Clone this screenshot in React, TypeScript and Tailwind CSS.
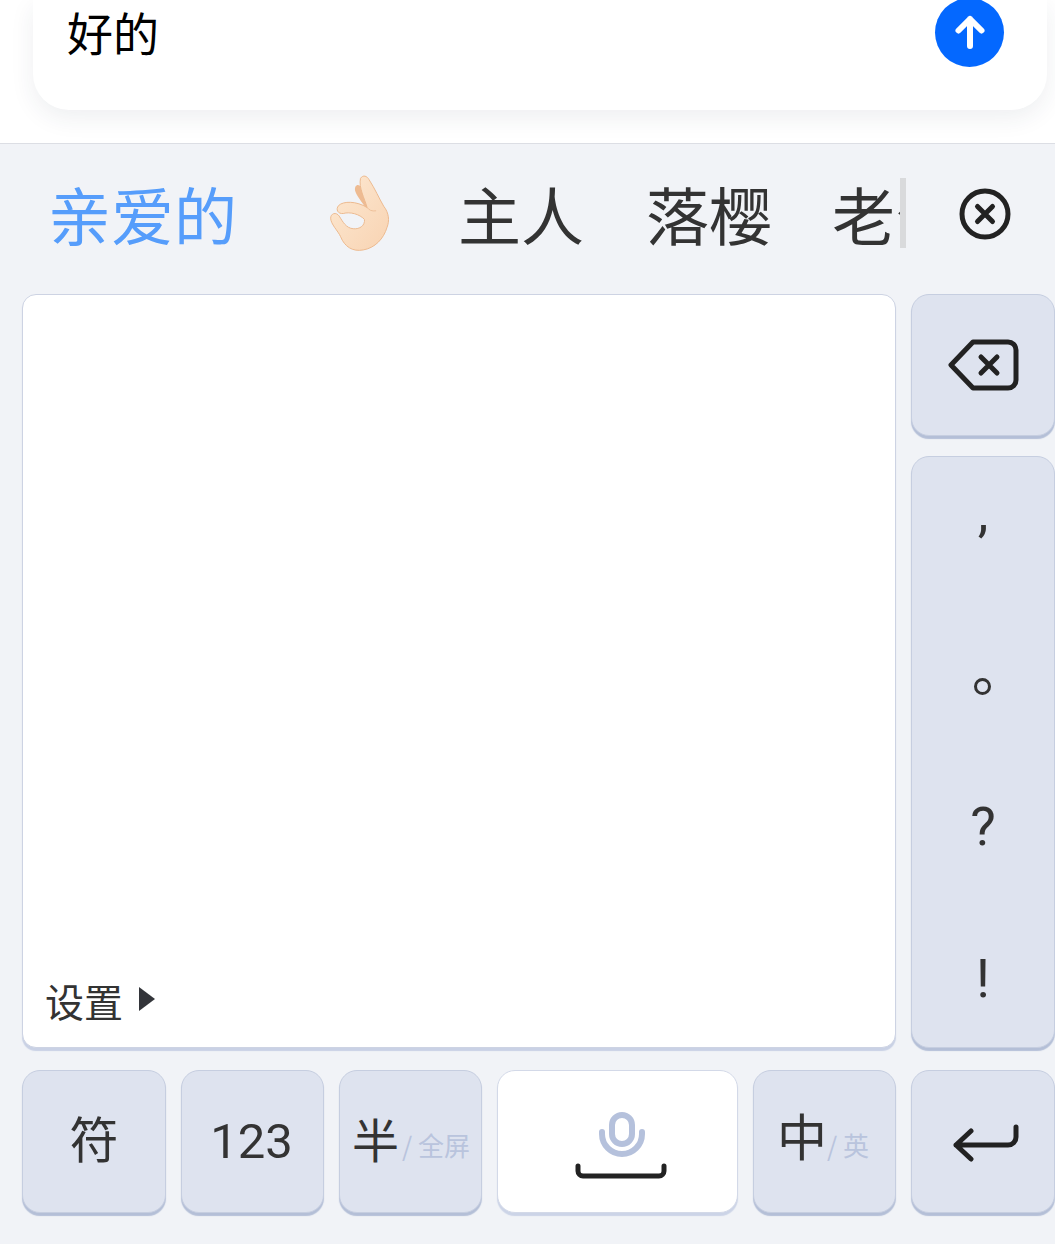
const CJK = "font-['Noto_Sans_CJK_SC','Noto_Sans',sans-serif]";
const keyBase = "flex items-center justify-center rounded-[18px] border border-[#c6cee0] shadow-[0_3px_1px_#b4bfd7]";
const grey = `${keyBase} bg-[#dee3ef]`;

function OkHand() {
  return (
    <svg width="58" height="75" viewBox="60 45 175 226" className="block overflow-visible">
      <defs>
        <linearGradient id="h" x1="0" y1="0" x2="1" y2="1">
          <stop offset="0" stopColor="#fde9d3" />
          <stop offset="1" stopColor="#f8d3b2" />
        </linearGradient>
      </defs>
      <path d="M136 90C132 72 146 66 154 78L192 132L168 142C156 122 142 108 136 90Z" fill="#eebb92" />
      <path fill="url(#h)" stroke="#ecb98f" strokeWidth="3" d="M152 52C160 40 172 45 178 56C196 84 208 112 222 136C238 156 240 180 232 200C222 234 196 262 160 268C128 274 104 258 92 228C84 210 62 190 62 172C62 158 78 152 88 166C98 182 108 202 130 204C150 206 166 194 164 176C150 160 120 152 100 158C84 160 76 146 86 134C100 120 140 120 172 140C164 112 146 80 152 52Z" />
      <path d="M172 140C178 148 186 152 198 150" fill="none" stroke="#eebf99" strokeWidth="3" strokeLinecap="round" />
    </svg>
  );
}

export default function App() {
  return (
    <div className={`w-[1055px] h-[1244px] overflow-hidden bg-[#f1f3f7] ${CJK}`}>
      <div className="h-[144px] bg-white border-b border-[#dcdee4] pl-[33px] pr-2">
        <div className="relative h-[110px] rounded-b-[36px] bg-white shadow-[0_8px_24px_rgba(40,50,80,0.08)] pl-[34px]">
          <div className="pt-[1px] text-[46px] leading-[60px] text-black">好的</div>
          <div className="absolute right-[43px] top-[-2px] flex h-[69px] w-[69px] items-center justify-center rounded-full bg-[#0468ff]">
            <svg width="40" height="40" viewBox="0 0 40 40" fill="none" stroke="#fff" strokeWidth="6" strokeLinecap="round" strokeLinejoin="round">
              <path d="M20 6v27M8.5 17.5 20 6l11.5 11.5" />
            </svg>
          </div>
        </div>
      </div>

      <div className="flex h-[150px] items-center pb-[12px] pl-[48px]">
        <div className="flex h-[80px] w-[852px] items-center overflow-hidden whitespace-nowrap text-[63px] leading-[70px] text-[#333333]">
          <span className="text-[#569dfb]">亲爱的</span>
          <span className="ml-[93px] mr-[70px] w-[58px] shrink-0"><OkHand /></span>
          <span>主人</span>
          <span className="ml-[62px]">落樱</span>
          <span className="ml-[60px]">老公</span>
        </div>
        <div className="h-[70px] w-[6px] bg-[#d9dadc]" />
        <div className="ml-[53px] mt-[2px]">
          <svg width="52" height="52" viewBox="0 0 52 52" fill="none" stroke="#222" strokeWidth="5" strokeLinecap="round" className="block">
            <circle cx="26" cy="26" r="23" />
            <path d="M18.5 18.5l15 15M33.5 18.5l-15 15" />
          </svg>
        </div>
      </div>

      <div className="flex gap-[15px] pl-[22px]">
        <div className="flex h-[754px] w-[874px] flex-col justify-end rounded-[14px] border border-[#cdd3e3] bg-white pl-[22px] pb-[24px] shadow-[0_3px_1px_#c9d1e5]">
          <div className="flex items-center text-[#333]">
            <span className="text-[39px] leading-[46px]">设置</span>
            <span className="ml-[16px] mb-[2px] h-0 w-0 border-y-[12px] border-l-[16px] border-y-transparent border-l-[#33353a]" />
          </div>
        </div>
        <div className="flex w-[144px] flex-col gap-[20px]">
          <div className={`${grey} h-[142px]`}>
            <svg width="72" height="52" viewBox="0 0 72 52" fill="none" stroke="#222" strokeWidth="5" strokeLinecap="round" strokeLinejoin="round">
              <path d="M26 3h35a8 8 0 0 1 8 8v30a8 8 0 0 1-8 8H26L4 26z" />
              <path d="M34 18l16 16M50 18 34 34" />
            </svg>
          </div>
          <div className={`${grey} grid h-[592px] grid-rows-4 justify-items-center text-[54px] text-[#333] font-['Roboto','Noto_Sans',sans-serif]`}>
            <span className="flex h-full items-center pb-[36px] leading-none">,</span>
            <span className="flex h-full items-center pr-[1px]"><span className="mt-[16px] block h-[17px] w-[17px] rounded-full border-[3px] border-[#333]" /></span>
            <span className="flex h-full items-center pt-[2px] leading-none">?</span>
            <span className="flex h-full items-center pt-[12px] leading-none">!</span>
          </div>
        </div>
      </div>

      <div className="mt-[22px] flex gap-[15px] pl-[22px]">
        <div className={`${grey} h-[143px] w-[144px] pb-[10px] text-[49px] text-[#333]`}>符</div>
        <div className={`${grey} h-[143px] w-[143px] pr-[2px] text-[49px] text-[#333] font-['Roboto',sans-serif]`}>123</div>
        <div className={`${grey} h-[143px] w-[143px] text-[#333]`}>
          <span className="mb-[6px] ml-[1px] text-[47px]">半</span>
          <span className="ml-[3px] mt-[6px] whitespace-nowrap text-[26px] text-[#b9c4dd]">/ 全屏</span>
        </div>
        <div className={`${keyBase} h-[143px] w-[241px] bg-white !border-[#d3d9e8] !shadow-[0_3px_1px_#ccd4e7]`}>
          <svg width="96" height="70" viewBox="0 0 96 70" fill="none" strokeLinecap="round" strokeWidth="5" className="ml-[8px] mt-[9px]">
            <rect x="38" y="4" width="20" height="29" rx="10" stroke="#b5c1dc" strokeWidth="6" />
            <path d="M28 21v2a20 20 0 0 0 40 0v-2" stroke="#b5c1dc" strokeWidth="6" />
            <path d="M4 55v5a5 5 0 0 0 5 5h76a5 5 0 0 0 5-5v-5" stroke="#222" strokeWidth="5" />
          </svg>
        </div>
        <div className={`${grey} h-[143px] w-[143px] pr-[3px] text-[#333]`}>
          <span className="mb-[14px] text-[50px]">中</span>
          <span className="mt-[6px] whitespace-nowrap text-[26px] text-[#b9c4dd]">/ 英</span>
        </div>
        <div className={`${grey} h-[143px] w-[144px]`}>
          <svg width="68" height="40" viewBox="0 0 68 40" fill="none" stroke="#222" strokeWidth="5" strokeLinecap="round" strokeLinejoin="round" className="ml-[5px] mt-[4px]">
            <path d="M64 3v10a8 8 0 0 1-8 8H4M19 7 4 21l15 14" />
          </svg>
        </div>
      </div>
    </div>
  );
}
